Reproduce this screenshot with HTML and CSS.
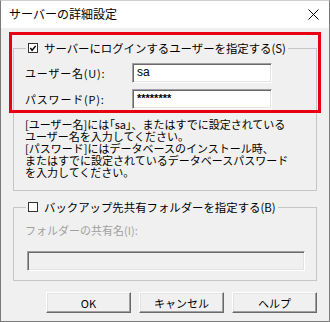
FILE: index.html
```html
<!DOCTYPE html>
<html lang="ja">
<head>
<meta charset="utf-8">
<link rel="stylesheet" href="styles.css">
</head>
<body>
<div class="window">
  <div class="titlebar">
    <span class="title">サーバーの詳細設定</span>
    <svg class="close" width="11" height="11" viewBox="0 0 11 11"><path d="M0.5 0.5 L10.5 10.5 M10.5 0.5 L0.5 10.5" stroke="#000" stroke-width="1" fill="none"/></svg>
  </div>
  <div class="content">
    <div class="group group-login">
      <div class="legend">
        <span class="check checked"><svg width="9" height="9" viewBox="0 0 9 9"><path d="M1.5 4 L3.5 6.5 L7.5 1.5" stroke="#000" stroke-width="1.6" fill="none"/></svg></span>
        <span>サーバーにログインするユーザーを指定する(S)</span>
      </div>
      <div class="fields">
        <label class="flabel">ユーザー名(U):</label>
        <div class="input">sa</div>
        <label class="flabel">パスワード(P):</label>
        <div class="input pw">********</div>
      </div>
      <p class="desc">[ユーザー名]には<span class="narrow">「sa」</span>、またはすでに設定されている<br>ユーザー名を入力してください。<br>[パスワード]にはデータベースのインストール時、<br>またはすでに設定されているデータベースパスワード<br>を入力してください。</p>
    </div>
    <div class="group group-backup">
      <div class="legend">
        <span class="check"></span>
        <span>バックアップ先共有フォルダーを指定する(B)</span>
      </div>
      <div class="disabled-label">フォルダーの共有名(I):</div>
      <div class="input disabled"></div>
    </div>
    <div class="buttons">
      <div class="btn">OK</div>
      <div class="btn">キャンセル</div>
      <div class="btn">ヘルプ</div>
    </div>
  </div>
  <div class="annot"></div>
</div>
</body>
</html>
```
FILE: styles.css
```css
* { box-sizing: border-box; }
html, body { margin: 0; padding: 0; background: #fff; }
body {
  font-family: "Noto Sans CJK JP", "Noto Sans", sans-serif;
  font-size: 11px;
  color: #000;
}
.window {
  position: relative;
  width: 330px;
  height: 322px;
  border: 1px solid #7a7a7a;
  border-top-color: #cfcfcf;
  background: #f0f0f0;
  display: flex;
  flex-direction: column;
}
.titlebar {
  height: 27px;
  background: #fff;
  display: flex;
  align-items: center;
  justify-content: space-between;
  padding: 0 10px 1px 8px;
  flex: none;
}
.title { font-size: 12px; line-height: 14px; }
.close { display: block; }
.content {
  flex: 1;
  padding: 12px 12px 0 12px;
  display: flex;
  flex-direction: column;
}
.group {
  border: 1px solid #c6c6c6;
  margin-top: 8px;
  padding: 0 0 0 11px;
}
.legend {
  display: flex;
  align-items: center;
  gap: 6px;
  height: 16px;
  margin-top: -9px;
  margin-left: 1px;
  padding: 0 2px 0 2px;
  background: #f0f0f0;
  width: fit-content;
  line-height: 16px;
  font-size: 11.4px;
}
.check {
  width: 10px;
  height: 10px;
  border: 1px solid #333;
  background: #fff;
  display: flex;
  align-items: center;
  justify-content: center;
}
.check svg { display: block; }
.fields {
  display: grid;
  grid-template-columns: 107px 140px;
  row-gap: 6px;
  margin-top: 7px;
  align-items: center;
}
.flabel { line-height: 14px; letter-spacing: 0.8px; }
.input {
  height: 20px;
  background: #fff;
  border: 1px solid;
  border-color: #a0a0a0 #fff #fff #a0a0a0;
  box-shadow: inset 1px 1px 0 #696969, inset -1px -1px 0 #e3e3e3;
  padding: 0 4px;
  line-height: 17px;
  font-family: "Liberation Sans", "Noto Sans", sans-serif;
  font-size: 12px;
}
.input.pw { font-size: 11px; font-weight: bold; }
.desc {
  margin: 9px 0 12px 0;
  line-height: 12px;
}
.narrow { font-feature-settings: "palt"; }
.group-backup { margin-top: 16px; padding-bottom: 9px; }
.disabled-label { color: #a0a0a0; margin-top: 8px; line-height: 14px; }
.input.disabled {
  background: #f0f0f0;
  width: 278px;
  margin: 14px 0 0 2px;
}
.buttons {
  display: flex;
  justify-content: flex-end;
  gap: 8px;
  margin-top: 11px;
}
.btn {
  width: 85px;
  height: 21px;
  background: #f0f0f0;
  border: 1px solid;
  border-color: #fff #696969 #696969 #fff;
  box-shadow: inset -1px -1px 0 #a0a0a0, inset 1px 1px 0 #e3e3e3;
  display: flex;
  align-items: center;
  justify-content: center;
  font-size: 11px;
}
.annot {
  position: absolute;
  left: 8px;
  top: 31px;
  width: 312px;
  height: 81px;
  border: 3px solid #e60012;
}
```
